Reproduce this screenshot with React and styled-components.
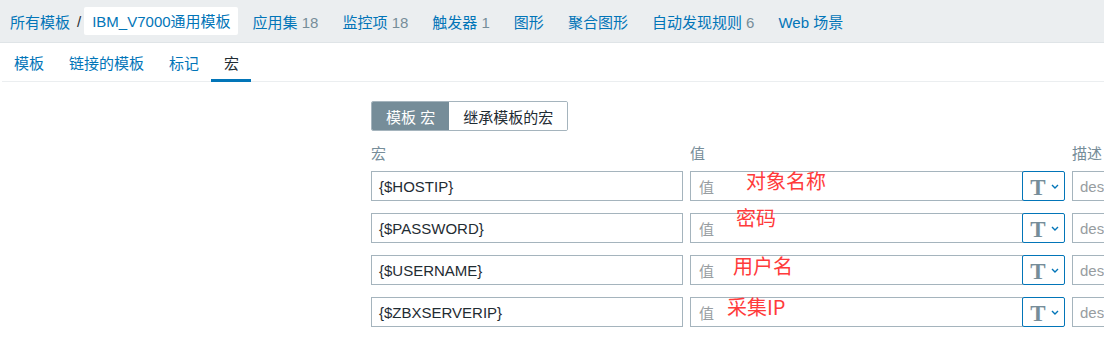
import styled, { createGlobalStyle } from "styled-components";

const Global = createGlobalStyle`
    body {
        margin: 0;
        background: #fff;
        font-family: "Liberation Sans", "Noto Sans CJK SC", sans-serif;
        font-size: 15px;
        color: #1f2c33;
    }
`;

const Nav = styled.div`
    height: 42px;
    background: #ebeef0;
    border-bottom: 1px solid #dfe4e7;
    display: flex;
    align-items: center;
    padding-left: 10px;
`;

const Crumb = styled.span`
    color: #0275b8;
    white-space: nowrap;
`;

const Slash = styled.span`
    color: #1f2c33;
    margin: 0 3px 0 7px;
`;

const CrumbBox = styled.span`
    background: #fff;
    border-radius: 2px;
    color: #0275b8;
    padding: 3px 7px 4px 8px;
    margin-right: 3px;
    white-space: nowrap;
`;

const NavItem = styled.span`
    color: #0275b8;
    margin-left: 12px;
    margin-right: 12px;
    white-space: nowrap;
`;

const Count = styled.span`
    color: #768d99;
`;

const Panel = styled.div`
    background: #fff;
    margin-left: 2px;
    height: 300px;
    overflow: hidden;
`;

const Tabs = styled.div`
    display: flex;
    height: 38px;
    border-bottom: 1px solid #ebeef0;
    margin-left: -1px;
`;

const Tab = styled.div`
    padding: 0 12px 0 13px;
    display: flex;
    align-items: center;
    color: ${(p) => (p.$active ? "#1f2c33" : "#0275b8")};
    border-bottom: 3px solid ${(p) => (p.$active ? "#0275b8" : "transparent")};
    margin-bottom: -1px;
    padding-top: 2px;
`;

const Form = styled.div`
    padding: 19px 0 0 369px;
`;

const Radio = styled.div`
    box-sizing: border-box;
    display: inline-flex;
    height: 30px;
    border: 1px solid #a5b4bd;
    border-radius: 2px;
    overflow: hidden;
    margin-bottom: 15px;
`;

const RadioOption = styled.div`
    display: flex;
    align-items: center;
    padding: 0 ${(p) => (p.$selected ? "14px" : "14px")};
    background: ${(p) => (p.$selected ? "#768d99" : "#fff")};
    color: ${(p) => (p.$selected ? "#fff" : "#1f2c33")};
    white-space: nowrap;
`;

const Grid = styled.div`
    display: grid;
    grid-template-columns: 312px 375px 100px;
    column-gap: 7px;
    row-gap: 12px;
`;

const Label = styled.div`
    color: #768d99;
    height: 16px;
    line-height: 16px;
    margin-bottom: -3px;
    white-space: nowrap;
`;

const Input = styled.div`
    box-sizing: border-box;
    height: 30px;
    border: 1px solid #a5b4bd;
    display: flex;
    align-items: center;
    padding-left: 7px;
    color: ${(p) => (p.$placeholder ? "#979da1" : "#1f2c33")};
    white-space: nowrap;
    overflow: hidden;
`;

const ValueCell = styled.div`
    position: relative;
    display: flex;
`;

const ValueInput = styled(Input)`
    flex: 1;
    padding-left: 8px;
`;

const TypeButton = styled.div`
    box-sizing: border-box;
    width: 43px;
    height: 30px;
    margin-left: -1px;
    border: 1px solid #0275b8;
    border-radius: 2px;
    display: flex;
    align-items: center;
    justify-content: center;
    gap: 5px;
    padding-left: 2px;
`;

const TGlyph = styled.span`
    font-family: "Liberation Serif", "DejaVu Serif", serif;
    font-weight: bold;
    font-size: 23px;
    color: #768d99;
    line-height: 1;
    margin-top: 2px;
`;

const Note = styled.span`
    position: absolute;
    left: ${(p) => p.$x}px;
    top: ${(p) => p.$y}px;
    font-family: "Noto Sans CJK SC", sans-serif;
    font-size: 20px;
    line-height: 20px;
    color: #ff3b3b;
    white-space: nowrap;
    pointer-events: none;
`;

function Chevron() {
    return (
        <svg width="8" height="5" viewBox="0 0 8 5">
            <path d="M1 1l3 3 3-3" fill="none" stroke="#0275b8" strokeWidth="1.4" />
        </svg>
    );
}

const navItems = [
    ["应用集", "18"],
    ["监控项", "18"],
    ["触发器", "1"],
    ["图形", null],
    ["聚合图形", null],
    ["自动发现规则", "6"],
    ["Web 场景", null],
];

const macros = [
    { name: "{$HOSTIP}", note: "对象名称", x: 56, y: 0 },
    { name: "{$PASSWORD}", note: "密码", x: 46, y: -5 },
    { name: "{$USERNAME}", note: "用户名", x: 43, y: 1 },
    { name: "{$ZBXSERVERIP}", note: "采集IP", x: 37, y: 0 },
];

export default function App() {
    return (
        <>
            <Global />
            <Nav>
                <Crumb>所有模板</Crumb>
                <Slash>/</Slash>
                <CrumbBox>IBM_V7000通用模板</CrumbBox>
                {navItems.map(([label, count]) => (
                    <NavItem key={label}>
                        {label}
                        {count && <Count> {count}</Count>}
                    </NavItem>
                ))}
            </Nav>
            <Panel>
                <Tabs>
                    <Tab>模板</Tab>
                    <Tab>链接的模板</Tab>
                    <Tab>标记</Tab>
                    <Tab $active>宏</Tab>
                </Tabs>
                <Form>
                    <Radio>
                        <RadioOption $selected>模板 宏</RadioOption>
                        <RadioOption>继承模板的宏</RadioOption>
                    </Radio>
                    <Grid>
                        <Label>宏</Label>
                        <Label>值</Label>
                        <Label>描述</Label>
                        {macros.map((m) => (
                            <Row key={m.name} macro={m} />
                        ))}
                    </Grid>
                </Form>
            </Panel>
        </>
    );
}

function Row({ macro }) {
    return (
        <>
            <Input>{macro.name}</Input>
            <ValueCell>
                <ValueInput $placeholder>值</ValueInput>
                <TypeButton>
                    <TGlyph>T</TGlyph>
                    <Chevron />
                </TypeButton>
                <Note $x={macro.x} $y={macro.y}>{macro.note}</Note>
            </ValueCell>
            <Input $placeholder>description</Input>
        </>
    );
}
